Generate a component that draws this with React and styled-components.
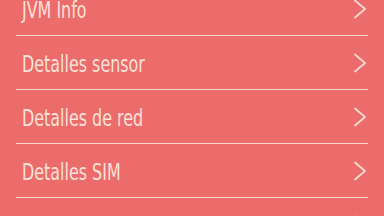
import React from "react";
import styled, { createGlobalStyle } from "styled-components";

const Global = createGlobalStyle`
  html, body { margin: 0; padding: 0; background: #ec6b6b; overflow: hidden; }
  body { width: 384px; height: 216px; }
`;

const Screen = styled.div`
  width: 384px;
  height: 216px;
  overflow: hidden;
  background: #ec6b6b;
`;

const List = styled.ul`
  list-style: none;
  margin: -18px 0 0 0;
  padding: 0 16px;
`;

const Row = styled.li`
  box-sizing: border-box;
  display: flex;
  align-items: center;
  justify-content: space-between;
  height: 54px;
  padding: 0 2px 0 6px;
  border-bottom: 1.5px solid #f9d8cb;
`;

const Label = styled.span`
  display: inline-block;
  padding-top: 3px;
  font-family: "DejaVu Sans Condensed", "DejaVu Sans", sans-serif;
  font-weight: 400;
  font-size: 23px;
  line-height: 1;
  color: #fbe2d8;
  white-space: nowrap;
  transform: scaleX(0.77);
  transform-origin: left center;
`;

const Chevron = () => (
  <svg width="12" height="20" viewBox="0 0 12 20">
    <polyline points="1,1.5 11,10 1,18.5" fill="none" stroke="#f9dccf" strokeWidth="1.8" strokeLinecap="round" strokeLinejoin="round" />
  </svg>
);

const items = ["JVM Info", "Detalles sensor", "Detalles de red", "Detalles SIM", ""];

export default function App() {
  return (
    <Screen>
      <Global />
      <List>
        {items.map((t, i) => (
          <Row key={i}>
            <Label>{t}</Label>
            <Chevron />
          </Row>
        ))}
      </List>
    </Screen>
  );
}
